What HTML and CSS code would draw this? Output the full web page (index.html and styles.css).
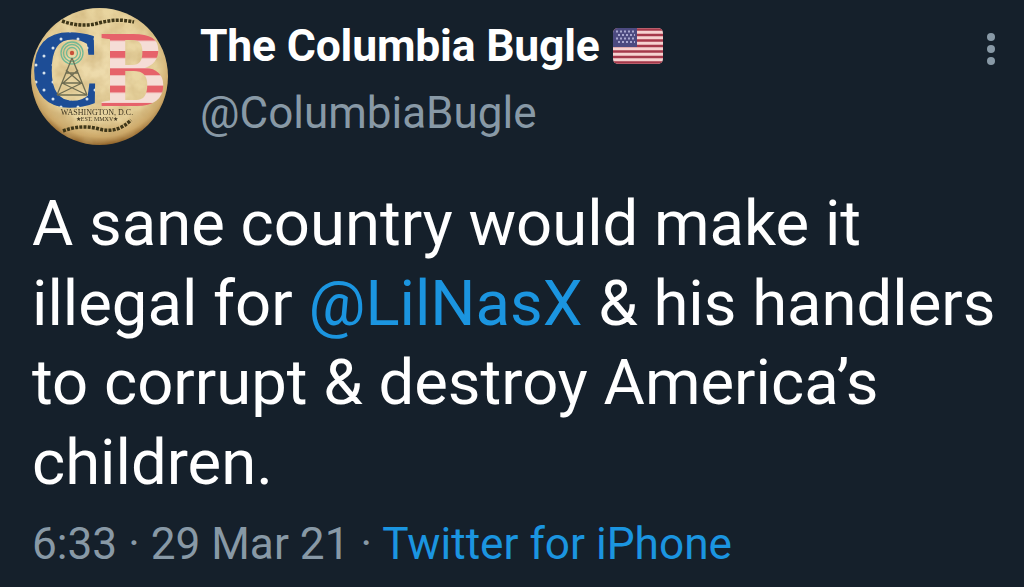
FILE: index.html
```html
<!DOCTYPE html>
<html lang="en">
<head>
<meta charset="utf-8">
<title>Tweet</title>
<link rel="stylesheet" href="styles.css">
</head>
<body>
<main class="tweet">
  <header class="head">
    <svg class="avatar" viewBox="0 0 137 137" role="img" aria-label="The Columbia Bugle logo">
      <defs>
        <radialGradient id="parch" cx="50%" cy="42%" r="58%">
          <stop offset="0" stop-color="#eedcae"/>
          <stop offset="0.72" stop-color="#e8d49e"/>
          <stop offset="0.9" stop-color="#cda868"/>
          <stop offset="1" stop-color="#8f6229"/>
        </radialGradient>
        <pattern id="stars" width="17" height="17" patternUnits="userSpaceOnUse">
          <rect width="17" height="17" fill="#1d4d96"/>
          <circle cx="5" cy="6" r="1.500" fill="#d6e2ec"/>
          <circle cx="13" cy="14" r="1.500" fill="#d6e2ec"/>
        </pattern>
        <pattern id="stripes" width="20" height="17.300" patternUnits="userSpaceOnUse" y="25.700">
          <rect width="20" height="17.300" fill="#f5ddd6"/>
          <rect width="20" height="7" fill="#e6626a"/>
        </pattern>
        <filter id="grain" x="0" y="0" width="100%" height="100%">
          <feTurbulence type="fractalNoise" baseFrequency="0.07" numOctaves="3" seed="4"/>
          <feColorMatrix values="0 0 0 0 0.55  0 0 0 0 0.38  0 0 0 0 0.15  0.9 0 0 0 -0.28"/>
          <feComposite in2="SourceGraphic" operator="in"/>
        </filter>
      </defs>
      <circle cx="68.500" cy="68.500" r="68.500" fill="url(#parch)"/>
      <circle cx="68.500" cy="68.500" r="68.500" filter="url(#grain)"/>
      <text class="logo-letter" x="-1" y="98" textLength="72" lengthAdjust="spacingAndGlyphs" fill="url(#stars)" stroke="url(#stars)" stroke-width="1.500">C</text>
      <text class="logo-letter" x="69" y="98" textLength="66" lengthAdjust="spacingAndGlyphs" fill="url(#stripes)">B</text>
      <g fill="none" stroke="#72b894" stroke-width="1.300">
        <circle cx="41" cy="45" r="5.500"/>
        <circle cx="41" cy="45" r="8.500"/>
        <circle cx="41" cy="45" r="11"/>
      </g>
      <circle cx="41" cy="45" r="2.200" fill="#c8503a"/>
      <path d="M41 50 L26 87 M41 50 L56 87 M35 65 H47 M31 75 H51 M26 87 H56 M35 62 L50 75 M47 62 L32 75 M31 75 L56 87 M51 75 L26 87" fill="none" stroke="#6f6d52" stroke-width="1.300"/>
      <text class="logo-small" x="66" y="107" text-anchor="middle">WASHINGTON, D.C.</text>
      <text class="logo-small logo-est" x="66" y="113" text-anchor="middle">★EST. MMXV★</text>
      <path d="M31 13 Q50 20 68 15 T103 14" fill="none" stroke="#3f3719" stroke-width="3.500" stroke-dasharray="3 1.200"/>
      <path d="M32 123 Q50 116 68 121 T100 112" fill="none" stroke="#3f3719" stroke-width="3.500" stroke-dasharray="3 1.200"/>
    </svg>
    <div class="who">
      <div class="name-row">
        <span class="name">The Columbia Bugle</span>
        <svg class="flag" viewBox="0 0 50 36" aria-hidden="true">
          <defs><clipPath id="fc"><rect width="50" height="36" rx="5"/></clipPath></defs>
          <g clip-path="url(#fc)">
            <rect width="50" height="36" fill="#f6d2d0"/>
            <path d="M0 1.500H50M0 7H50M0 12.500H50M0 18H50M0 23.500H50M0 29H50M0 34.500H50" stroke="#a5384a" stroke-width="2.600"/>
            <rect width="24" height="19" fill="#4c4a80"/>
            <path d="M3 3.500H22M5 7H22M3 10.500H22M5 14H22" stroke="#a9a8d0" stroke-width="2" stroke-dasharray="2 2"/>
          </g>
        </svg>
      </div>
      <div class="handle">@ColumbiaBugle</div>
    </div>
    <div class="more" aria-hidden="true"><i></i><i></i><i></i></div>
  </header>
  <p class="body">A sane country would make it<br>illegal for <span class="link">@LilNasX</span> &amp; his handlers<br>to corrupt &amp; destroy America’s<br>children.</p>
  <p class="meta">6:33 · 29 Mar 21 · <span class="link">Twitter for iPhone</span></p>
</main>
</body>
</html>
```
FILE: styles.css
```css
html, body {
  margin: 0;
  height: 100%;
  background: #15202b;
  overflow: hidden;
}
.tweet {
  padding: 8px 24px 0 31px;
  font-family: Roboto, "Liberation Sans", sans-serif;
  color: #ffffff;
}
.head {
  display: flex;
  align-items: flex-start;
}
.avatar {
  width: 137px;
  height: 137px;
  flex: none;
  overflow: visible;
  filter: blur(0.5px);
}
.logo-letter {
  font-family: "Liberation Serif", serif;
  font-weight: 700;
  font-size: 110px;
}
.logo-small {
  font-family: "Liberation Serif", serif;
  font-size: 8px;
  fill: #3d3420;
}
.logo-est {
  font-size: 6px;
}
.who {
  margin-left: 32px;
  flex: 1;
}
.name-row {
  display: flex;
  align-items: center;
  gap: 13px;
  height: 76px;
}
.name {
  font-size: 44.500px;
  font-weight: 700;
  letter-spacing: -0.200px;
}
.flag {
  width: 50px;
  height: 36px;
  flex: none;
}
.handle {
  margin-top: 3px;
  font-size: 44px;
  line-height: 52px;
  color: #8899a6;
}
.more {
  display: flex;
  flex-direction: column;
  gap: 4px;
  padding: 25px 5px 0 0;
}
.more i {
  width: 8px;
  height: 8px;
  border-radius: 50%;
  background: #8899a6;
}
.body {
  margin: 39px 0 0 1px;
  font-size: 63.400px;
  line-height: 79.600px;
}
.link {
  color: #1b95e0;
}
.meta {
  margin: 16px 0 0 1px;
  font-size: 44.200px;
  line-height: 52px;
  color: #8899a6;
}
```
